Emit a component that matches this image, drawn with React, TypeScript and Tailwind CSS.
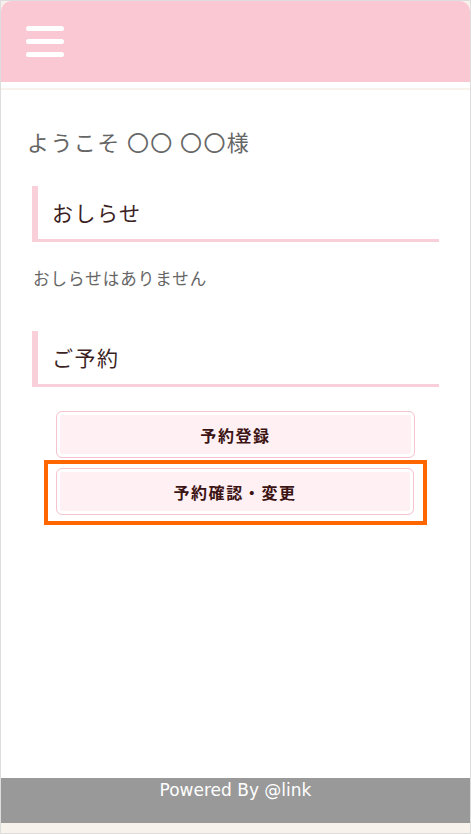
import React from 'react';

const jp = { fontFamily: '"Noto Sans CJK JP", "Noto Sans", sans-serif' };

const SectionTitle: React.FC<{ title: string }> = ({ title }) => (
  <div className="h-[56px] border-l-[6px] border-b-[3px] border-[#f9d0da] pl-[14px] flex items-center">
    <h2 className="text-[21px] leading-none tracking-[1.5px] text-[#3c1f1f]" style={jp}>
      {title}
    </h2>
  </div>
);

const MenuButton: React.FC<{ label: string }> = ({ label }) => (
  <button
    type="button"
    className="w-full h-[47px] rounded-[6px] border border-[#f7c3cf] bg-[#fff0f3] shadow-[inset_0_0_0_3px_#ffffff] text-[16px] font-bold tracking-[1.6px] text-[#3c1414]"
    style={jp}
  >
    {label}
  </button>
);

export default function App() {
  return (
    <div className="w-[471px] h-[834px] border border-[#dddddd] bg-[#f7f3ec] flex flex-col">
      <div className="flex-1 mb-[10px] bg-white rounded-t-[10px] flex flex-col">
        <header className="h-[81px] bg-[#fac8d3] rounded-t-[10px] pl-[25px] flex flex-col justify-center gap-[8px]">
          <span className="block w-[38px] h-[5px] rounded-full bg-white" />
          <span className="block w-[38px] h-[5px] rounded-full bg-white" />
          <span className="block w-[38px] h-[5px] rounded-full bg-white" />
        </header>
        <div className="mt-[6px] h-[2px] bg-[#f7f3ec]" />

        <main className="flex-1 px-[31px]">
          <p className="-ml-[5px] mt-[36px] text-[22px] leading-[30px] tracking-[1.4px] text-[#666666]" style={jp}>
            ようこそ 〇〇 〇〇様
          </p>

          <section className="mt-[30px]">
            <SectionTitle title="おしらせ" />
            <p className="mt-[24px] ml-[1px] text-[16.5px] leading-[24px] tracking-[1px] text-[#666666]" style={jp}>
              おしらせはありません
            </p>
          </section>

          <section className="mt-[41px]">
            <SectionTitle title="ご予約" />
            <div className="mt-[24px] px-[24px] flex flex-col">
              <MenuButton label="予約登録" />
              <div className="-mx-[12px] mt-[2px] border-4 border-[#ff6600] pl-[8px] pr-[9px] pt-[4px] pb-[6px]">
                <MenuButton label="予約確認・変更" />
              </div>
            </div>
          </section>
        </main>

        <footer className="h-[45px] bg-[#999999] text-center">
          <span className="block text-[17px] leading-[24px] text-white" style={{ fontFamily: '"DejaVu Sans", Verdana, sans-serif' }}>
            Powered By @link
          </span>
        </footer>
      </div>
    </div>
  );
}
